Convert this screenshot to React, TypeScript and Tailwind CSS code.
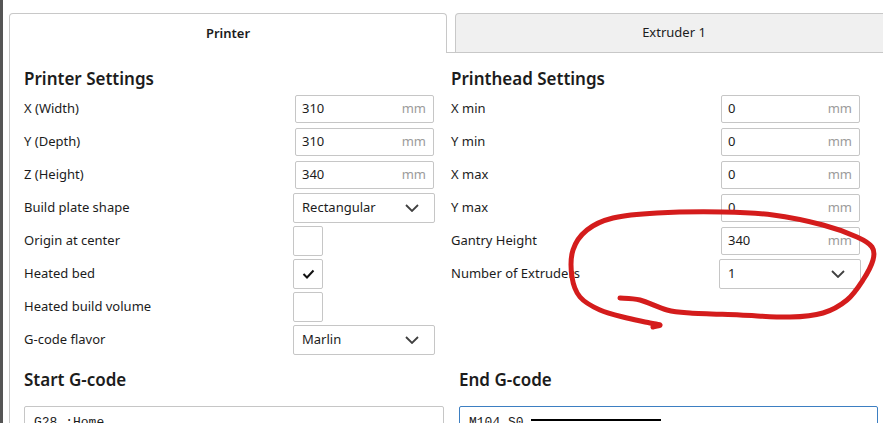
import React from "react";

type Pt = [number, number];

// freehand red loop drawn over the screenshot
const LOOP: Pt[] = [
	[620, 298], [640, 300], [667, 310], [690, 313], [740, 315], [790, 317],
	[823, 313], [847, 300], [863, 280], [873, 260], [872, 247], [857, 237],
	[823, 225], [773, 215], [723, 212], [657, 213], [613, 218], [587, 230],
	[573, 250], [572, 277], [580, 297], [600, 310], [627, 318], [650, 323],
	[660, 325], [653, 327],
];

function smooth(pts: Pt[]) {
	let d = `M${pts[0][0]},${pts[0][1]}`;
	for (let i = 0; i < pts.length - 1; i++) {
		const p0 = pts[i - 1] || pts[i];
		const p1 = pts[i];
		const p2 = pts[i + 1];
		const p3 = pts[i + 2] || p2;
		const c1x = p1[0] + (p2[0] - p0[0]) / 6;
		const c1y = p1[1] + (p2[1] - p0[1]) / 6;
		const c2x = p2[0] - (p3[0] - p1[0]) / 6;
		const c2y = p2[1] - (p3[1] - p1[1]) / 6;
		d += ` C${c1x},${c1y} ${c2x},${c2y} ${p2[0]},${p2[1]}`;
	}
	return d;
}

function Chevron() {
	return (
		<svg width="14" height="8" viewBox="0 0 14 8" fill="none">
			<path d="M1 1l6 6 6-6" stroke="#404040" strokeWidth="1.8" />
		</svg>
	);
}

function NumberField({ value }: { value: string }) {
	return (
		<div className="ml-[2px] flex h-[28px] w-[139px] items-center justify-between rounded-[2px] border border-[#c6c6c6] pl-[6px] pr-[7px]">
			<span>{value}</span>
			<span className="text-[#9b9b9b]">mm</span>
		</div>
	);
}

function Select({ value }: { value: string }) {
	return (
		<div className="flex h-[30px] w-[142px] items-center justify-between rounded-[2px] border border-[#c6c6c6] pl-[8px] pr-[15px]">
			<span>{value}</span>
			<Chevron />
		</div>
	);
}

function Checkbox({ checked }: { checked?: boolean }) {
	return (
		<div className="flex h-[30px] w-[30px] items-center justify-center rounded-[2px] border border-[#c6c6c6]">
			{checked && (
				<svg width="13" height="10" viewBox="0 0 13 10" fill="none">
					<path d="M1.5 5l3.5 3.5L11.5 1.5" stroke="#111" strokeWidth="2" />
				</svg>
			)}
		</div>
	);
}

function Row({
	label,
	labelWidth,
	children,
}: {
	label: string;
	labelWidth: string;
	children: React.ReactNode;
}) {
	return (
		<div className="flex h-[33px] items-center">
			<div className={labelWidth}>{label}</div>
			{children}
		</div>
	);
}

export default function App() {
	return (
		<div className="relative flex h-[423px] w-[883px] overflow-hidden bg-white font-['Noto_Sans',sans-serif] text-[13px] text-[#1c1c1c]">
			<div className="w-[3px] shrink-0 bg-[#555]" />
			<div className="flex shrink-0 flex-col pl-[6px] pt-[13px]">
				{/* tabs */}
				<div className="flex h-[40px] shrink-0">
					<div className="flex w-[438px] items-center justify-center rounded-t-[4px] border border-b-0 border-[#c8c8c8] font-semibold">
						Printer
					</div>
					<div className="flex w-[500px] border-b border-[#c8c8c8] pl-[8px]">
						<div className="flex w-[438px] items-center justify-center rounded-t-[4px] border border-b-0 border-[#c8c8c8] bg-[#f0f0f0]">
							Extruder 1
						</div>
					</div>
				</div>

				{/* body */}
				<div className="shrink-0 grow border-l border-[#c8c8c8] pl-[14px] pt-[14px]">
					<div className="grid grid-cols-[427px_430px]">
						<div>
							<h2 className="h-[24px] text-[17px] font-semibold leading-[24px]">
								Printer Settings
							</h2>
							<div className="pt-[1px]">
								<Row label="X (Width)" labelWidth="w-[269px]">
									<NumberField value="310" />
								</Row>
								<Row label="Y (Depth)" labelWidth="w-[269px]">
									<NumberField value="310" />
								</Row>
								<Row label="Z (Height)" labelWidth="w-[269px]">
									<NumberField value="340" />
								</Row>
								<Row label="Build plate shape" labelWidth="w-[269px]">
									<Select value="Rectangular" />
								</Row>
								<Row label="Origin at center" labelWidth="w-[269px]">
									<Checkbox />
								</Row>
								<Row label="Heated bed" labelWidth="w-[269px]">
									<Checkbox checked />
								</Row>
								<Row label="Heated build volume" labelWidth="w-[269px]">
									<Checkbox />
								</Row>
								<Row label="G-code flavor" labelWidth="w-[269px]">
									<Select value="Marlin" />
								</Row>
							</div>
						</div>
						<div>
							<h2 className="h-[24px] text-[17px] font-semibold leading-[24px]">
								Printhead Settings
							</h2>
							<div className="pt-[1px]">
								<Row label="X min" labelWidth="w-[268px]">
									<NumberField value="0" />
								</Row>
								<Row label="Y min" labelWidth="w-[268px]">
									<NumberField value="0" />
								</Row>
								<Row label="X max" labelWidth="w-[268px]">
									<NumberField value="0" />
								</Row>
								<Row label="Y max" labelWidth="w-[268px]">
									<NumberField value="0" />
								</Row>
								<Row label="Gantry Height" labelWidth="w-[268px]">
									<NumberField value="340" />
								</Row>
								<Row label="Number of Extruders" labelWidth="w-[268px]">
									<Select value="1" />
								</Row>
							</div>
						</div>
					</div>

					{/* g-code */}
					<div className="mt-[12px] grid grid-cols-[420px_419px] gap-x-[15px]">
						<div>
							<h2 className="h-[24px] text-[17px] font-semibold leading-[24px]">
								Start G-code
							</h2>
							<div className="mt-[14px] h-[60px] rounded-[2px] border border-[#c6c6c6] pl-[9px] pt-[6px] font-['Liberation_Mono',monospace] text-[13px] whitespace-pre">
								G28 ;Home
							</div>
						</div>
						<div>
							<h2 className="h-[24px] text-[17px] font-semibold leading-[24px]">
								End G-code
							</h2>
							<div className="relative mt-[14px] h-[60px] rounded-[2px] border border-[#3d7fc2] pl-[9px] pt-[6px] font-['Liberation_Mono',monospace] text-[13px] whitespace-pre">
								M104 S0
								<div className="absolute left-[71px] top-[12px] h-[2px] w-[130px] bg-black" />
							</div>
						</div>
					</div>
				</div>
			</div>

			<svg
				className="pointer-events-none absolute left-0 top-0"
				width="883"
				height="423"
				viewBox="0 0 883 423"
				fill="none"
			>
				<path
					d={smooth(LOOP)}
					stroke="#d41c1c"
					strokeWidth="5"
					strokeLinecap="round"
					strokeLinejoin="round"
				/>
			</svg>
		</div>
	);
}
